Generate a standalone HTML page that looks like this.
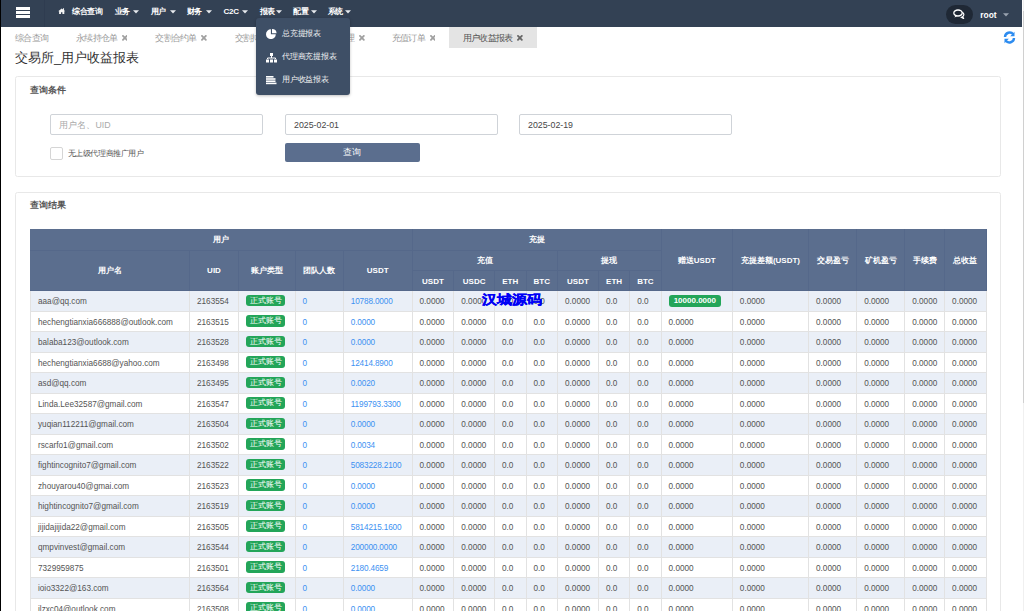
<!DOCTYPE html>
<html><head><meta charset="utf-8">
<style>
*{box-sizing:border-box;margin:0;padding:0}
html,body{width:1024px;height:611px;overflow:hidden;background:#fff}
body{position:relative;font-family:"Liberation Sans",sans-serif;color:#555}
.abs{position:absolute}
#lline{position:absolute;left:0;top:0;width:1px;height:611px;background:#000;z-index:50}
#sbar{position:absolute;left:1022px;top:0;width:2px;height:611px;background:#fff;z-index:50}
#sbar::before{content:"";position:absolute;left:1px;top:0;width:1px;height:611px;background:#f0f0f0}
#sbar::after{content:"";position:absolute;left:0.5px;top:10.8px;width:1.5px;height:391.8px;background:#d0d0d0}
#nav{position:absolute;left:0;top:0;width:1022px;height:26.6px;background:#334154}
#nav .sep{position:absolute;left:43.5px;top:0;width:1px;height:26.6px;background:#2f3c50}
#ham span{position:absolute;left:16px;width:13.5px;height:2.6px;background:#fff}
.mi{position:absolute;top:6.5px;font-size:8px;font-weight:bold;color:#fff;line-height:9px;white-space:nowrap;letter-spacing:-0.3px}
.car{position:absolute;top:10.3px;width:0;height:0;border-left:2.7px solid transparent;border-right:2.7px solid transparent;border-top:2.9px solid #e8ebef}
#pill{position:absolute;left:946px;top:5px;width:27px;height:19px;border-radius:9.5px;background:#1f2835}
#root{position:absolute;left:980.3px;top:9.5px;font-size:8.4px;font-weight:bold;color:#fff;line-height:10px}
.tab{position:absolute;top:27.8px;height:20.6px;font-size:9px;line-height:20.6px;color:#9a9a9a;white-space:nowrap;letter-spacing:-0.8px}
.tab .x{position:absolute;top:7.2px;width:5.8px;height:5.8px}
#acttab{position:absolute;left:449px;top:27.2px;width:88px;height:20.4px;background:#e4e4e4}
#title{position:absolute;left:15px;top:49px;font-size:13px;line-height:18px;color:#333;white-space:nowrap}
.panel{position:absolute;left:15px;width:986px;border:1px solid #e8e8e8;border-radius:2.5px;background:#fff}
.ph{position:absolute;left:30px;font-size:9px;font-weight:bold;color:#555;line-height:10px}
.inp{position:absolute;top:114.1px;height:20.9px;border:1px solid #cfd3d8;border-radius:2px;font-size:8.8px;line-height:20.2px;padding-left:8px;color:#464646;background:#fff}
#btn{position:absolute;left:285px;top:142.6px;width:134.5px;height:19.7px;background:#5b6e8e;border-radius:2px;color:#fff;font-size:9px;line-height:19.5px;text-align:center}
#cb{position:absolute;left:50.4px;top:147.2px;width:12.2px;height:12.4px;border:1px solid #d5d5d5;border-radius:2px}
#cbl{position:absolute;left:67.7px;top:149px;font-size:8px;line-height:10px;color:#555;white-space:nowrap;letter-spacing:-0.4px}
#tbl{position:absolute;left:30px;top:229px;border-collapse:separate;border-spacing:0;table-layout:fixed;width:956.7px}
#tbl th{background:#5b6e8e;color:#fff;font-size:8px;font-weight:bold;text-align:center;vertical-align:middle;border-right:1px solid #55688a;border-bottom:1px solid #55688a;padding:1px 0 0 0;white-space:nowrap}
#tbl tr.h1{height:21.5px}
#tbl tr.h2{height:20.8px}
#tbl tr.h3{height:20px}
#tbl td{font-size:8.2px;color:#545454;text-align:left;vertical-align:middle;padding:1.2px 0 0 7px;border-right:1px solid #e2e2e2;border-bottom:1px solid #e2e2e2;white-space:nowrap;overflow:hidden}
#tbl td:first-child{border-left:1px solid #e2e2e2}
#tbl tr.o td,#tbl tr.e td{height:20.5px}
#tbl tr.o td{background:#eaeff7}
#tbl tr.e td{background:#fff}
#tbl td.lk{color:#3d91f2;letter-spacing:-0.15px}
.bd{display:inline-block;position:relative;top:-1px;width:39px;height:11.7px;line-height:11.7px;background:#23a559;color:#fff;border-radius:3px;text-align:center;font-size:8.3px;font-weight:500;vertical-align:middle}
.gb{display:inline-block;position:relative;top:-0.6px;width:52.5px;height:12px;line-height:12px;background:#23a559;color:#fff;border-radius:3px;text-align:center;font-size:8px;font-weight:bold;vertical-align:middle}
#dd{position:absolute;left:255.5px;top:18px;width:94px;height:76.5px;background:#3e4f66;border-radius:3px;box-shadow:0 1px 3px rgba(0,0,0,.25);z-index:20}
.ddi{position:absolute;left:26.5px;font-size:8px;font-weight:500;color:#f4f4f4;line-height:9px;white-space:nowrap;letter-spacing:-0.25px}
#wm{position:absolute;left:482px;top:291.5px;font-size:13px;font-weight:900;color:#0000f5;line-height:16px;white-space:nowrap;z-index:30;letter-spacing:0;-webkit-text-stroke:0.3px #0000f5;transform:scaleX(1.15);transform-origin:0 0}
</style></head>
<body>
<div id="lline"></div>
<div id="sbar"></div>

<div id="nav">
  <div id="ham"><span style="top:7px"></span><span style="top:11.2px"></span><span style="top:15.4px"></span></div>
  <div class="sep"></div>
  <svg class="abs" style="left:57.8px;top:7.9px" width="7.4" height="6.3" viewBox="0 0 8 7"><path d="M4 0.6 L0.1 3.6 L1.1 3.6 L1.1 6.8 L3.2 6.8 L3.2 4.7 L4.8 4.7 L4.8 6.8 L6.9 6.8 L6.9 3.6 L7.9 3.6 L6.6 2.6 L6.6 0.4 L5.5 0.4 L5.5 1.7 Z" fill="#f2f2f2"/></svg>
  <div class="mi" style="left:72px">综合查询</div>
  <div class="mi" style="left:114.7px">业务</div><svg class="abs" style="left:133.0px;top:10px" width="6" height="4" viewBox="0 0 6 4"><path d="M0 0.2H6L3 3.6Z" fill="#e8ebef"/></svg>
  <div class="mi" style="left:150.6px">用户</div><svg class="abs" style="left:169.6px;top:10px" width="6" height="4" viewBox="0 0 6 4"><path d="M0 0.2H6L3 3.6Z" fill="#e8ebef"/></svg>
  <div class="mi" style="left:186.7px">财务</div><svg class="abs" style="left:205.6px;top:10px" width="6" height="4" viewBox="0 0 6 4"><path d="M0 0.2H6L3 3.6Z" fill="#e8ebef"/></svg>
  <div class="mi" style="left:223.6px">C2C</div><svg class="abs" style="left:242.0px;top:10px" width="6" height="4" viewBox="0 0 6 4"><path d="M0 0.2H6L3 3.6Z" fill="#e8ebef"/></svg>
  <div class="mi" style="left:259.6px">报表</div><svg class="abs" style="left:276.3px;top:10px" width="6" height="4" viewBox="0 0 6 4"><path d="M0 0.2H6L3 3.6Z" fill="#e8ebef"/></svg>
  <div class="mi" style="left:293.4px">配置</div><svg class="abs" style="left:310.6px;top:10px" width="6" height="4" viewBox="0 0 6 4"><path d="M0 0.2H6L3 3.6Z" fill="#e8ebef"/></svg>
  <div class="mi" style="left:327.6px">系统</div><svg class="abs" style="left:344.6px;top:10px" width="6" height="4" viewBox="0 0 6 4"><path d="M0 0.2H6L3 3.6Z" fill="#e8ebef"/></svg>
  <div id="pill"></div>
  <svg class="abs" style="left:953px;top:9px" width="13" height="10" viewBox="0 0 13 10"><ellipse cx="5" cy="4" rx="4.2" ry="3" fill="none" stroke="#fff" stroke-width="1.3"/><path d="M2.5 6.5 L1.5 8.5 L4.5 7" fill="#fff"/><path d="M9.3 3.2 A4 3 0 0 1 8.5 8.3 L10.5 9.5 L9.7 7.6" fill="none" stroke="#fff" stroke-width="1.2"/></svg>
  <div id="root">root</div>
  <svg class="abs" style="left:1002.6px;top:13.3px" width="6" height="4" viewBox="0 0 6 4"><path d="M0 0.2H6L3 3.6Z" fill="#9aa3b0"/></svg>
</div>

<div id="acttab"></div>
<div class="tab" style="left:15.2px">综合查询</div>
<div class="tab" style="left:76.2px">永续持仓单<svg class="x" style="left:45.5px" viewBox="0 0 6 6"><path d="M1 1L5 5M5 1L1 5" stroke="#a0a0a0" stroke-width="1.9" stroke-linecap="round"/></svg></div>
<div class="tab" style="left:155.4px">交割合约单<svg class="x" style="left:45.5px" viewBox="0 0 6 6"><path d="M1 1L5 5M5 1L1 5" stroke="#a0a0a0" stroke-width="1.9" stroke-linecap="round"/></svg></div>
<div class="tab" style="left:234.6px">交割持仓单<svg class="x" style="left:45.5px" viewBox="0 0 6 6"><path d="M1 1L5 5M5 1L1 5" stroke="#a0a0a0" stroke-width="1.9" stroke-linecap="round"/></svg></div>
<div class="tab" style="left:313.7px">代理商管理<svg class="x" style="left:45.5px" viewBox="0 0 6 6"><path d="M1 1L5 5M5 1L1 5" stroke="#a0a0a0" stroke-width="1.9" stroke-linecap="round"/></svg></div>
<div class="tab" style="left:392px">充值订单<svg class="x" style="left:37.5px" viewBox="0 0 6 6"><path d="M1 1L5 5M5 1L1 5" stroke="#a0a0a0" stroke-width="1.9" stroke-linecap="round"/></svg></div>
<div class="tab" style="left:463px;color:#555">用户收益报表<svg class="x" style="left:54px" viewBox="0 0 6 6"><path d="M1 1L5 5M5 1L1 5" stroke="#666" stroke-width="1.9" stroke-linecap="round"/></svg></div>
<svg class="abs" style="left:1003px;top:31px" width="13" height="13" viewBox="0 0 13 13"><path d="M2 6 A4.6 4.6 0 0 1 10.3 3.4" fill="none" stroke="#2d8cf0" stroke-width="2.4"/><path d="M11.5 0.8 L11.5 5.2 L7.2 5.2 Z" fill="#2d8cf0"/><path d="M11 7 A4.6 4.6 0 0 1 2.7 9.6" fill="none" stroke="#2d8cf0" stroke-width="2.4"/><path d="M1.5 12.2 L1.5 7.8 L5.8 7.8 Z" fill="#2d8cf0"/></svg>

<div id="title">交易所_用户收益报表</div>

<div class="panel" style="top:76px;height:101px"></div>
<div class="panel" style="top:191.5px;height:500px"></div>
<div class="ph" style="top:85px">查询条件</div>
<div class="ph" style="top:200px">查询结果</div>
<div class="inp" style="left:50.4px;width:213.1px;color:#aaa">用户名、UID</div>
<div class="inp" style="left:285px;width:213px">2025-02-01</div>
<div class="inp" style="left:519px;width:212.5px">2025-02-19</div>
<div id="cb"></div>
<div id="cbl">无上级代理商推广用户</div>
<div id="btn">查询</div>


<table id="tbl">
<colgroup><col style="width:160.00px"><col style="width:49.00px"><col style="width:56.50px"><col style="width:48.30px"><col style="width:68.70px"><col style="width:41.75px"><col style="width:40.65px"><col style="width:31.60px"><col style="width:31.50px"><col style="width:40.90px"><col style="width:31.30px"><col style="width:31.30px"><col style="width:71.30px"><col style="width:76.20px"><col style="width:48.10px"><col style="width:48.10px"><col style="width:39.90px"><col style="width:41.60px"></colgroup>
<tr class="h1"><th colspan="5">用户</th><th colspan="7">充提</th><th rowspan="3">赠送USDT</th><th rowspan="3">充提差额(USDT)</th><th rowspan="3">交易盈亏</th><th rowspan="3">矿机盈亏</th><th rowspan="3">手续费</th><th rowspan="3">总收益</th></tr>
<tr class="h2"><th rowspan="2">用户名</th><th rowspan="2">UID</th><th rowspan="2">账户类型</th><th rowspan="2">团队人数</th><th rowspan="2">USDT</th><th colspan="4">充值</th><th colspan="3">提现</th></tr>
<tr class="h3"><th>USDT</th><th>USDC</th><th>ETH</th><th>BTC</th><th>USDT</th><th>ETH</th><th>BTC</th></tr>
<tr class="o"><td>aaa@qq.com</td><td>2163554</td><td><span class="bd">正式账号</span></td><td class="lk">0</td><td class="lk">10788.0000</td><td>0.0000</td><td>0.0000</td><td>0.0</td><td>0.0</td><td>0.0000</td><td>0.0</td><td>0.0</td><td><span class="gb">10000.0000</span></td><td>0.0000</td><td>0.0000</td><td>0.0000</td><td>0.0000</td><td>0.0000</td></tr>
<tr class="e"><td>hechengtianxia666888@outlook.com</td><td>2163515</td><td><span class="bd">正式账号</span></td><td class="lk">0</td><td class="lk">0.0000</td><td>0.0000</td><td>0.0000</td><td>0.0</td><td>0.0</td><td>0.0000</td><td>0.0</td><td>0.0</td><td>0.0000</td><td>0.0000</td><td>0.0000</td><td>0.0000</td><td>0.0000</td><td>0.0000</td></tr>
<tr class="o"><td>balaba123@outlook.com</td><td>2163528</td><td><span class="bd">正式账号</span></td><td class="lk">0</td><td class="lk">0.0000</td><td>0.0000</td><td>0.0000</td><td>0.0</td><td>0.0</td><td>0.0000</td><td>0.0</td><td>0.0</td><td>0.0000</td><td>0.0000</td><td>0.0000</td><td>0.0000</td><td>0.0000</td><td>0.0000</td></tr>
<tr class="e"><td>hechengtianxia6688@yahoo.com</td><td>2163498</td><td><span class="bd">正式账号</span></td><td class="lk">0</td><td class="lk">12414.8900</td><td>0.0000</td><td>0.0000</td><td>0.0</td><td>0.0</td><td>0.0000</td><td>0.0</td><td>0.0</td><td>0.0000</td><td>0.0000</td><td>0.0000</td><td>0.0000</td><td>0.0000</td><td>0.0000</td></tr>
<tr class="o"><td>asd@qq.com</td><td>2163495</td><td><span class="bd">正式账号</span></td><td class="lk">0</td><td class="lk">0.0020</td><td>0.0000</td><td>0.0000</td><td>0.0</td><td>0.0</td><td>0.0000</td><td>0.0</td><td>0.0</td><td>0.0000</td><td>0.0000</td><td>0.0000</td><td>0.0000</td><td>0.0000</td><td>0.0000</td></tr>
<tr class="e"><td>Linda.Lee32587@gmail.com</td><td>2163547</td><td><span class="bd">正式账号</span></td><td class="lk">0</td><td class="lk">1199793.3300</td><td>0.0000</td><td>0.0000</td><td>0.0</td><td>0.0</td><td>0.0000</td><td>0.0</td><td>0.0</td><td>0.0000</td><td>0.0000</td><td>0.0000</td><td>0.0000</td><td>0.0000</td><td>0.0000</td></tr>
<tr class="o"><td>yuqian112211@gmail.com</td><td>2163504</td><td><span class="bd">正式账号</span></td><td class="lk">0</td><td class="lk">0.0000</td><td>0.0000</td><td>0.0000</td><td>0.0</td><td>0.0</td><td>0.0000</td><td>0.0</td><td>0.0</td><td>0.0000</td><td>0.0000</td><td>0.0000</td><td>0.0000</td><td>0.0000</td><td>0.0000</td></tr>
<tr class="e"><td>rscarfo1@gmail.com</td><td>2163502</td><td><span class="bd">正式账号</span></td><td class="lk">0</td><td class="lk">0.0034</td><td>0.0000</td><td>0.0000</td><td>0.0</td><td>0.0</td><td>0.0000</td><td>0.0</td><td>0.0</td><td>0.0000</td><td>0.0000</td><td>0.0000</td><td>0.0000</td><td>0.0000</td><td>0.0000</td></tr>
<tr class="o"><td>fightincognito7@gmail.com</td><td>2163522</td><td><span class="bd">正式账号</span></td><td class="lk">0</td><td class="lk">5083228.2100</td><td>0.0000</td><td>0.0000</td><td>0.0</td><td>0.0</td><td>0.0000</td><td>0.0</td><td>0.0</td><td>0.0000</td><td>0.0000</td><td>0.0000</td><td>0.0000</td><td>0.0000</td><td>0.0000</td></tr>
<tr class="e"><td>zhouyarou40@gmai.com</td><td>2163523</td><td><span class="bd">正式账号</span></td><td class="lk">0</td><td class="lk">0.0000</td><td>0.0000</td><td>0.0000</td><td>0.0</td><td>0.0</td><td>0.0000</td><td>0.0</td><td>0.0</td><td>0.0000</td><td>0.0000</td><td>0.0000</td><td>0.0000</td><td>0.0000</td><td>0.0000</td></tr>
<tr class="o"><td>hightincognito7@gmail.com</td><td>2163519</td><td><span class="bd">正式账号</span></td><td class="lk">0</td><td class="lk">0.0000</td><td>0.0000</td><td>0.0000</td><td>0.0</td><td>0.0</td><td>0.0000</td><td>0.0</td><td>0.0</td><td>0.0000</td><td>0.0000</td><td>0.0000</td><td>0.0000</td><td>0.0000</td><td>0.0000</td></tr>
<tr class="e"><td>jijidajijida22@gmail.com</td><td>2163505</td><td><span class="bd">正式账号</span></td><td class="lk">0</td><td class="lk">5814215.1600</td><td>0.0000</td><td>0.0000</td><td>0.0</td><td>0.0</td><td>0.0000</td><td>0.0</td><td>0.0</td><td>0.0000</td><td>0.0000</td><td>0.0000</td><td>0.0000</td><td>0.0000</td><td>0.0000</td></tr>
<tr class="o"><td>qmpvinvest@gmail.com</td><td>2163544</td><td><span class="bd">正式账号</span></td><td class="lk">0</td><td class="lk">200000.0000</td><td>0.0000</td><td>0.0000</td><td>0.0</td><td>0.0</td><td>0.0000</td><td>0.0</td><td>0.0</td><td>0.0000</td><td>0.0000</td><td>0.0000</td><td>0.0000</td><td>0.0000</td><td>0.0000</td></tr>
<tr class="e"><td>7329959875</td><td>2163501</td><td><span class="bd">正式账号</span></td><td class="lk">0</td><td class="lk">2180.4659</td><td>0.0000</td><td>0.0000</td><td>0.0</td><td>0.0</td><td>0.0000</td><td>0.0</td><td>0.0</td><td>0.0000</td><td>0.0000</td><td>0.0000</td><td>0.0000</td><td>0.0000</td><td>0.0000</td></tr>
<tr class="o"><td>ioio3322@163.com</td><td>2163564</td><td><span class="bd">正式账号</span></td><td class="lk">0</td><td class="lk">0.0000</td><td>0.0000</td><td>0.0000</td><td>0.0</td><td>0.0</td><td>0.0000</td><td>0.0</td><td>0.0</td><td>0.0000</td><td>0.0000</td><td>0.0000</td><td>0.0000</td><td>0.0000</td><td>0.0000</td></tr>
<tr class="e"><td>jlzxc04@outlook.com</td><td>2163508</td><td><span class="bd">正式账号</span></td><td class="lk">0</td><td class="lk">0.0000</td><td>0.0000</td><td>0.0000</td><td>0.0</td><td>0.0</td><td>0.0000</td><td>0.0</td><td>0.0</td><td>0.0000</td><td>0.0000</td><td>0.0000</td><td>0.0000</td><td>0.0000</td><td>0.0000</td></tr>
</table>

<div id="dd">
  <svg class="abs" style="left:10px;top:11px" width="11" height="10" viewBox="0 0 11 10"><path d="M4.9 0.3 A4.9 4.9 0 1 0 9.8 5.2 L4.9 5.2 Z" fill="#fff"/><path d="M6 0 A4.6 4.6 0 0 1 10.6 4.2 L6 4.2 Z" fill="#fff"/></svg>
  <div class="ddi" style="top:10.5px">总充提报表</div>
  <svg class="abs" style="left:10px;top:35px" width="11" height="10" viewBox="0 0 11 10"><rect x="4" y="0" width="3" height="3" fill="#fff"/><path d="M5.5 3 V5 M1.5 6 V5 H9.5 V6" stroke="#fff" stroke-width="1" fill="none"/><rect x="0" y="6.5" width="3" height="3" fill="#fff"/><rect x="4" y="6.5" width="3" height="3" fill="#fff"/><rect x="8" y="6.5" width="3" height="3" fill="#fff"/></svg>
  <div class="ddi" style="top:33.5px">代理商充提报表</div>
  <svg class="abs" style="left:10.3px;top:58.4px" width="11" height="9" viewBox="0 0 11 9"><rect x="0" y="0" width="7.5" height="1.6" fill="#fff"/><rect x="0" y="2.2" width="9.5" height="1.6" fill="#fff"/><rect x="0" y="4.4" width="9.5" height="1.6" fill="#fff"/><rect x="0" y="6.6" width="10.5" height="1.6" fill="#fff"/></svg>
  <div class="ddi" style="top:56.5px">用户收益报表</div>
</div>

<div id="wm">汉城源码</div>
</body></html>
